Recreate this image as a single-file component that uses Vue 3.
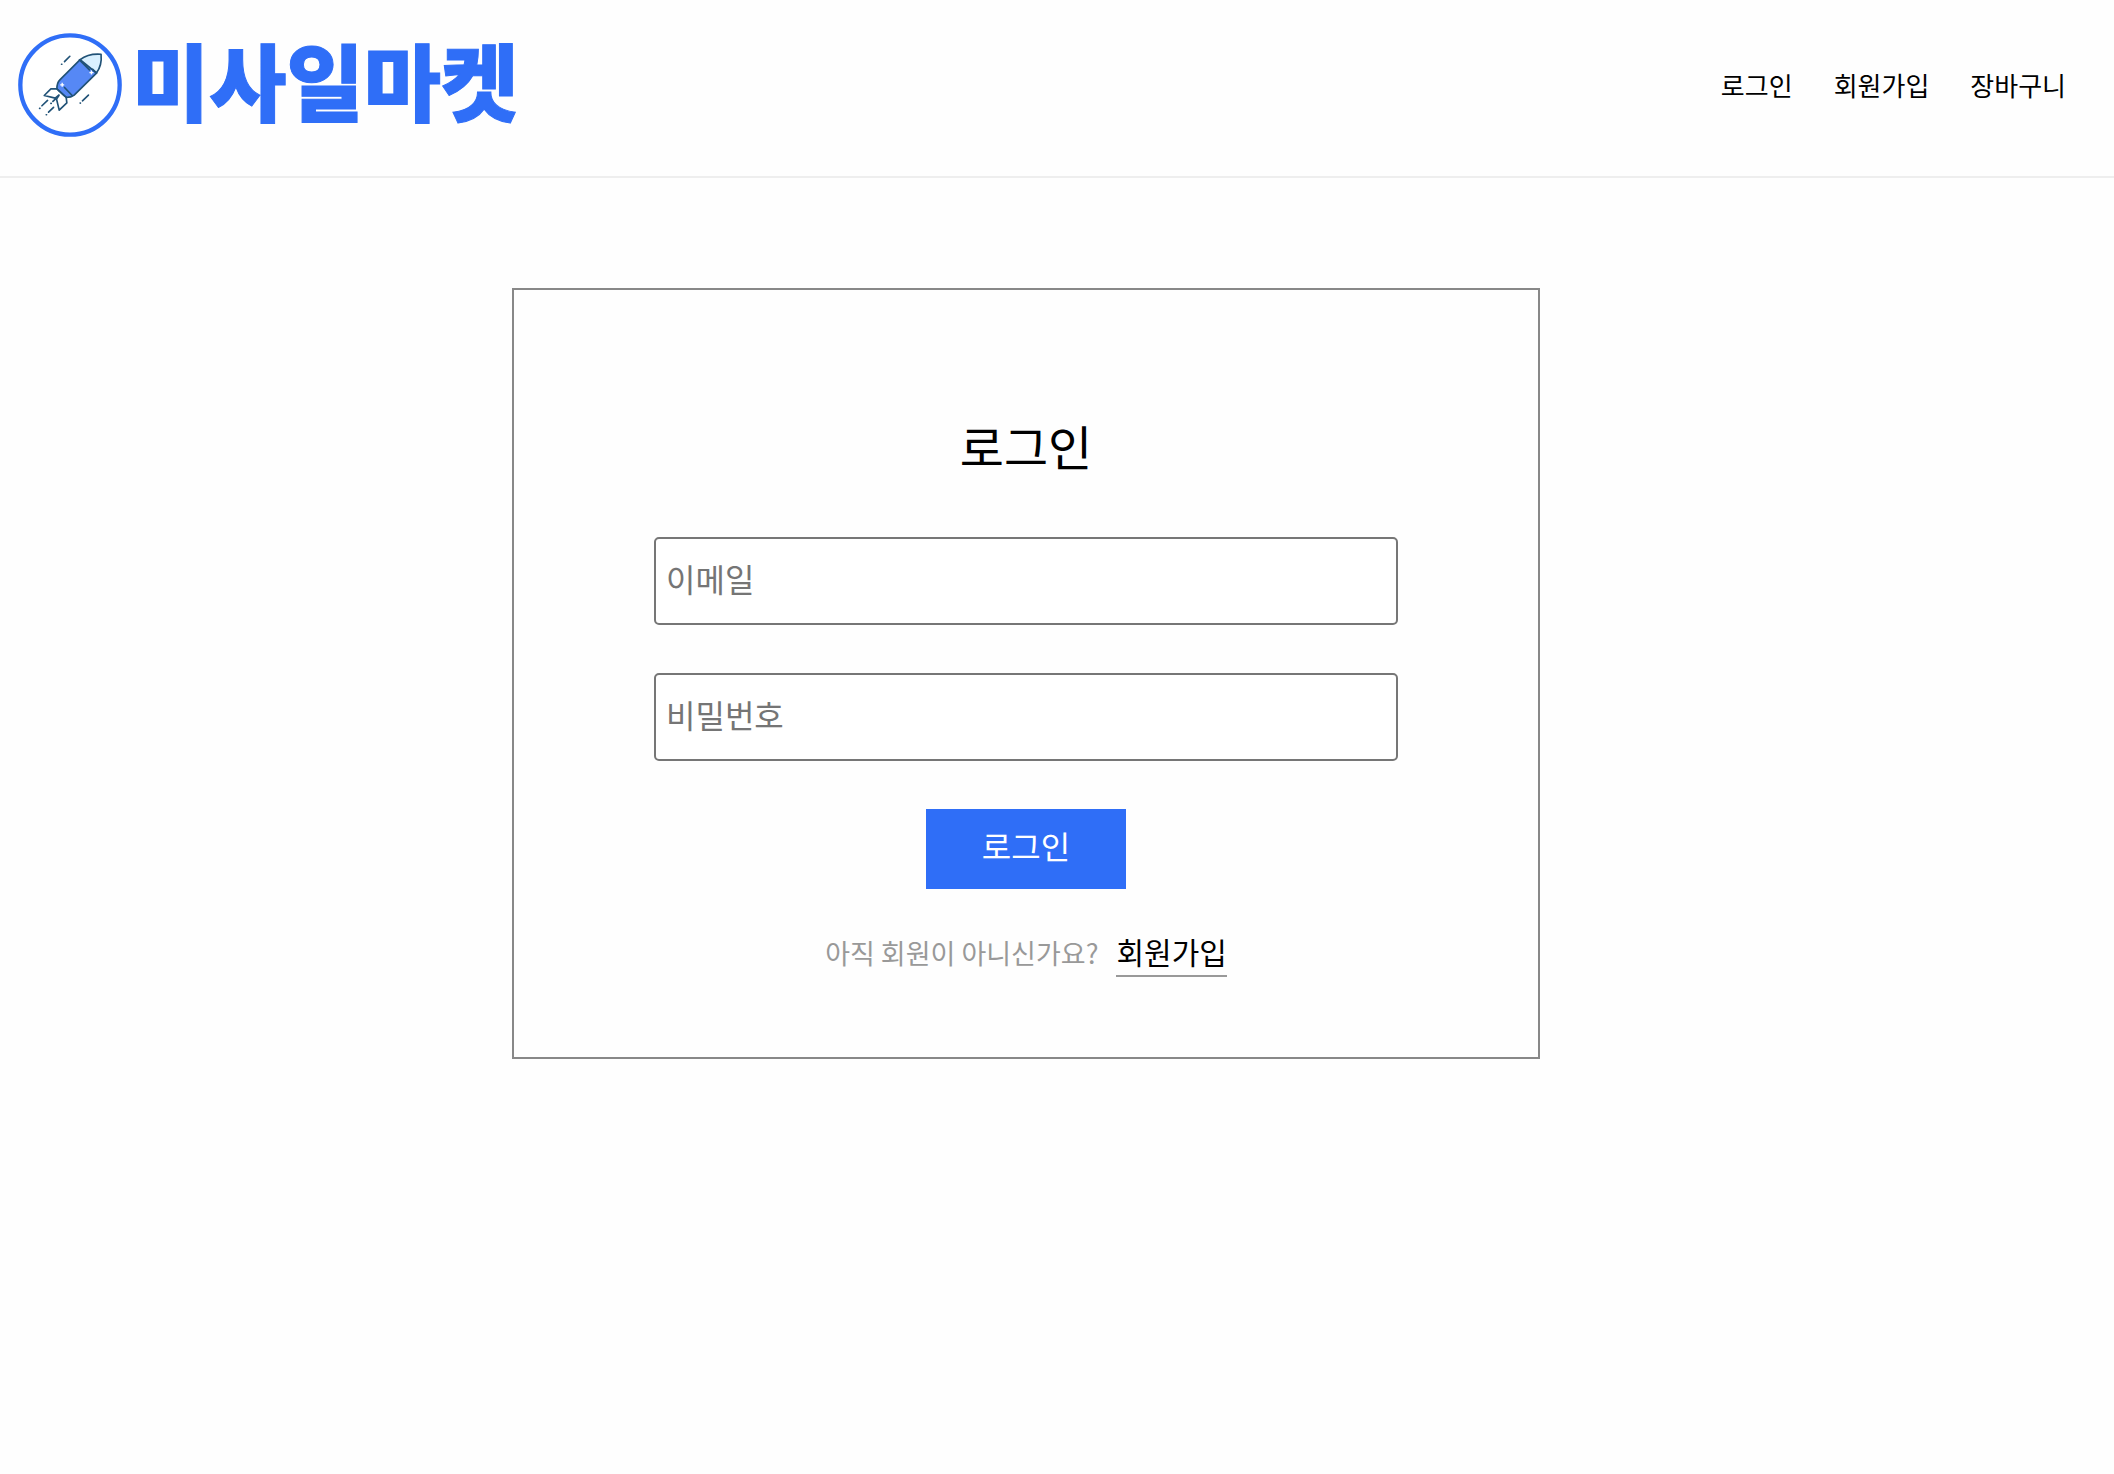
<script setup>
import { ref } from 'vue'

const email = ref('')
const password = ref('')
const links = ['로그인', '회원가입', '장바구니']
</script>

<template>
  <div class="page">
    <header class="header">
      <a class="brand" href="#">
        <svg class="emblem" viewBox="53 38 313 313" aria-hidden="true">
          <circle cx="209.500" cy="194.500" r="149.500" fill="#fff" stroke="#2f6ef7" stroke-width="13" />
          <g fill="none" stroke="#215277" stroke-width="5" stroke-linejoin="round" stroke-linecap="round">
            <path d="M170 206C170 194 172 186 179 179L240 118L290 158L222 225C217 229 208 232 198 232Z" fill="#5688f5" />
            <path d="M240 118C257 105 278 100 303 102C305 123 301 143 289 158Z" fill="#d9f0ff" />
            <path d="M238 119L268 149M278 147L288 157M193 202L216 226" />
            <path d="M170 206L152 206L132 226L165 234L176 225" fill="#fff" />
            <path d="M198 232L200 248L177 270L169 237L176 226" fill="#fff" />
            <path d="M170 206L198 232" />
            <path d="M209 108L193 124M265 225L247 242M142 241L125 257M160 262L145 276M166 236L158 244" />
            <path d="M184 132h1M240 249h1M118 265h1M138 284h1M152 250h1" />
          </g>
          <path d="M274 151v12M268 157h12M186 188v12M180 194h12" stroke="#fff" stroke-width="4" />
        </svg>
        <span class="wordmark">미사일마켓</span>
      </a>
      <nav class="nav">
        <a v-for="link in links" :key="link" href="#">{{ link }}</a>
      </nav>
    </header>

    <main class="main">
      <section class="card">
        <h1>로그인</h1>
        <form class="form" @submit.prevent>
          <input v-model="email" type="email" placeholder="이메일" aria-label="이메일" />
          <input v-model="password" type="password" placeholder="비밀번호" aria-label="비밀번호" />
          <button type="submit">로그인</button>
        </form>
        <p class="signup">
          <span>아직 회원이 아니신가요?</span>
          <a href="#">회원가입</a>
        </p>
      </section>
    </main>
  </div>
</template>

<style>
body {
  margin: 0;
  background: #fefefe;
}
</style>

<style scoped>
.page,
input,
button {
  font-family: "Noto Sans CJK KR", "Noto Sans", sans-serif;
}

.page {
  color: #000;
}

a {
  color: inherit;
  text-decoration: none;
}

.header {
  display: flex;
  justify-content: space-between;
  align-items: center;
  padding: 33px 48px 39px 18px;
  border-bottom: 2px solid #eee;
}

.brand {
  display: flex;
  align-items: center;
  gap: 10px;
}

.emblem {
  width: 104px;
  height: 104px;
}

.wordmark {
  padding-bottom: 12px;
  color: #2f6ef7;
  font-size: 84px;
  font-weight: 900;
  line-height: 92px;
  -webkit-text-stroke: 1px #2f6ef7;
}

.nav {
  display: flex;
  gap: 41px;
  font-size: 26px;
  line-height: 40px;
}

.main {
  display: flex;
  justify-content: center;
  padding: 110px 62px 110px 0;
}

.card {
  box-sizing: border-box;
  width: 100%;
  max-width: 1028px;
  padding: 119px 140px 80px;
  border: 2px solid #888;
}

h1 {
  margin: 0 0 56px;
  font-size: 48px;
  font-weight: 400;
  line-height: 72px;
  text-align: center;
}

.form {
  display: flex;
  flex-direction: column;
  align-items: center;
  gap: 48px;
}

input {
  box-sizing: border-box;
  width: 100%;
  height: 88px;
  padding: 0 10px 6px;
  border: 2px solid #767676;
  border-radius: 5px;
  background: #fff;
  font-size: 32px;
}

input::placeholder {
  color: #757575;
}

button {
  width: 200px;
  height: 80px;
  padding: 0 0 8px;
  border: 0;
  background: #2f6ef7;
  color: #fff;
  font-size: 32px;
}

.signup {
  display: flex;
  justify-content: center;
  align-items: baseline;
  gap: 18px;
  margin: 48px 0 0;
  color: #999;
  font-size: 27px;
  line-height: 28px;
}

.signup a {
  padding-bottom: 10px;
  border-bottom: 2px solid #999;
  color: #000;
  font-size: 30px;
}
</style>
